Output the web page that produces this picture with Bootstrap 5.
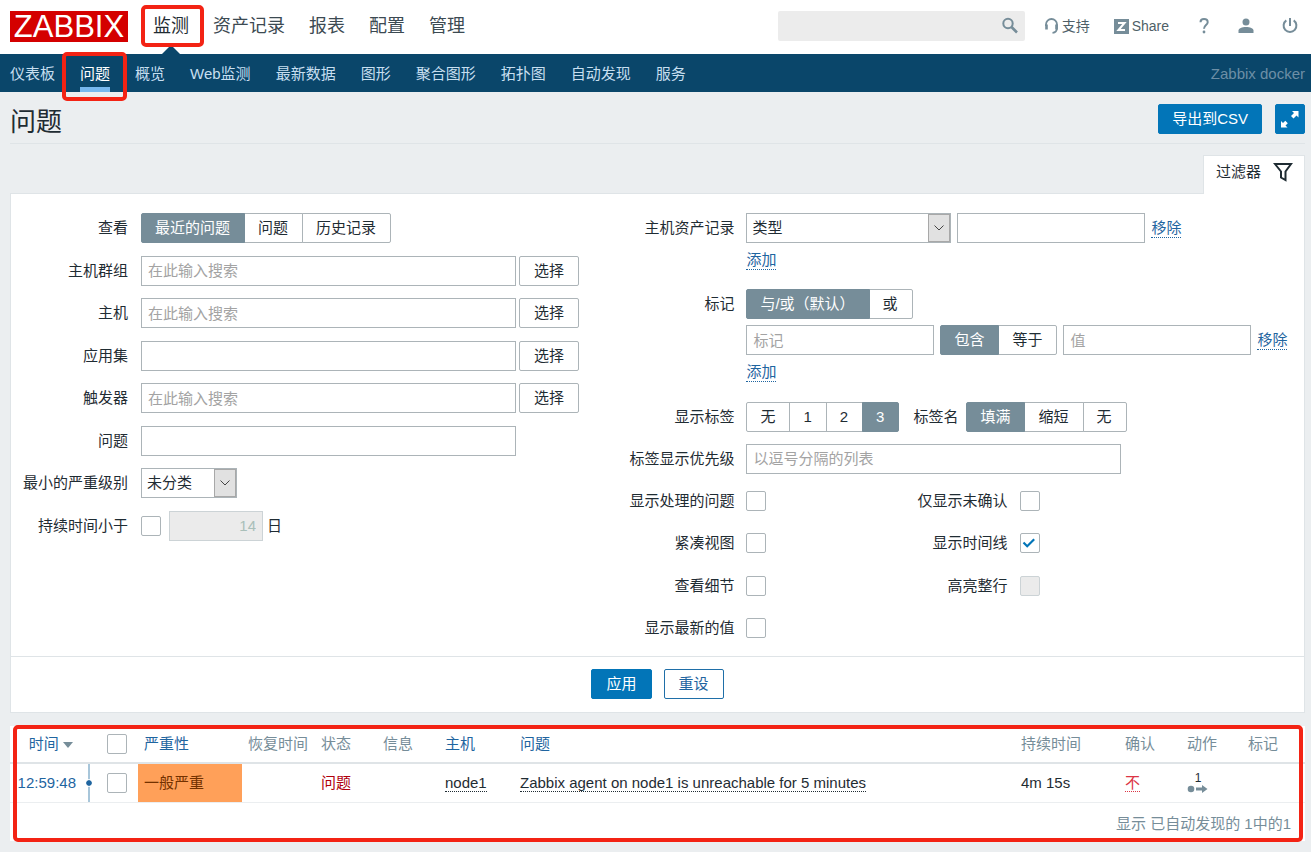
<!DOCTYPE html>
<html lang="zh-CN">
<head>
<meta charset="utf-8">
<meta name="viewport" content="width=device-width, initial-scale=1">
<title>Zabbix docker: 问题</title>
<link href="https://cdn.jsdelivr.net/npm/bootstrap@5.3.0/dist/css/bootstrap.min.css" rel="stylesheet">
<style>
  :root { --ink: #1f2c33; --line: #dfe4e7; --field: #acb4b8; --blue: #0275b8; --slate: #768d99; --frame: #f32314; }
  body { background: #ebeef0; color: var(--ink); font: 15px/20px "Liberation Sans", "Noto Sans CJK SC", sans-serif; }
  a { color: #1f65a0; text-decoration: none; }

  /* header */
  .top-bar { height: 54px; padding: 0 12px 2px 10px; }
  .brand { background: #d40000; color: #fff; font-size: 31px; line-height: 31px; width: 118px; height: 31px; text-align: center; margin-right: 13px; }
  .brand:hover { color: #fff; }
  .main-menu { align-self: flex-start; }
  .main-menu .nav-link { position: relative; display: flex; align-items: center; height: 54px; padding: 0 12px 3px; font-size: 18px; color: #3c4a52; }
  .main-menu .nav-link.active { color: var(--ink); }
  .main-menu .nav-link.active::after { content: ""; position: absolute; left: 50%; bottom: 0; margin-left: -9px; border: 9px solid transparent; border-top: 0; border-bottom-color: #0a466a; }
  .red-frame { position: absolute; border: 4px solid var(--frame); border-radius: 5px; pointer-events: none; z-index: 3; }
  .frame-main { inset: 5px -3px 7px 0; }
  .frame-sub { inset: -2px -5px -9px -6px; }
  .frame-table { inset: -1px 2px -1px 3px; }
  .search-box { width: 247px; position: relative; margin-right: 19px; }
  .search-box input { height: 30px; border: 0; border-radius: 2px; background: #ececec; padding: 0 34px 0 6px; font-size: 15px; }
  .search-box button { position: absolute; right: 6px; top: 6px; padding: 0; border: 0; background: none; display: flex; }
  .tools { gap: 24px; }
  .icon-tools { gap: 27px; margin-left: 4px; }
  .tool { color: #4f5f68; font-size: 14px; display: flex; align-items: center; gap: 3px; }
  .tool svg, .search-box svg { color: var(--slate); }

  /* sub navigation */
  .sub-bar { background: #0a466a; height: 38px; padding: 0 6px 0 0; }
  .sub-bar .nav-link { position: relative; height: 38px; padding: 10px 12px 8px; margin-right: 1px; color: #c7dff0; }
  .sub-bar .nav-item:first-child .nav-link { padding-left: 10px; }
  .sub-bar .nav-link.active { color: #fff; }
  .sub-bar .nav-link.active::after { content: ""; position: absolute; left: 12px; right: 12px; bottom: 0; height: 5px; background: #77b8ee; }
  .server-name { color: #6d8fa6; padding-top: 2px; }

  /* page body */
  .page-body { padding: 0 6px 11px 10px; }
  .title-row { height: 52px; border-bottom: 1px solid var(--line); }
  .title-row h1 { font-size: 26px; line-height: 36px; font-weight: 400; margin: 8px 0 0; }
  .title-buttons { gap: 13px; padding-top: 3px; }
  .btn { --bs-btn-border-radius: 2px; --bs-btn-font-size: 15px; --bs-btn-line-height: 20px; --bs-btn-padding-y: 4px; --bs-btn-padding-x: 14px; }
  .btn-blue { --bs-btn-bg: var(--blue); --bs-btn-color: #fff; --bs-btn-border-color: var(--blue); --bs-btn-hover-bg: #02659f; --bs-btn-hover-color: #fff; }
  .btn-line { --bs-btn-color: #1f65a0; --bs-btn-bg: #fff; --bs-btn-border-color: #1f6fa8; --bs-btn-hover-color: #1f65a0; }
  .btn-csv { --bs-btn-padding-x: 13px; }
  .btn-full { width: 30px; height: 30px; padding: 0; }
  .btn-pick { margin-left: 3px; }
  .btn-pick, .seg .btn { --bs-btn-bg: #fff; --bs-btn-color: var(--ink); --bs-btn-border-color: var(--field); --bs-btn-active-bg: var(--slate); --bs-btn-active-color: #fff; --bs-btn-active-border-color: var(--slate); }
  .seg .btn { padding-left: 13px; }
  .filter-tab { background: #fff; border: 1px solid var(--line); border-bottom: 0; height: 39px; padding: 0 11px 7px 12px; gap: 12px; margin: 11px 0 -1px; position: relative; color: var(--ink); }
  .panel-box { background: #fff; border: 1px solid var(--line); }

  /* filter form */
  .filter-grid { display: grid; grid-template-columns: 469fr 531fr; padding: 19px 0 13px; }
  .filter-left { min-height: 328px; }
  .filter-right { min-height: 430px; }
  .f-row { display: flex; align-items: center; min-height: 30px; }
  .f-row > .f-label { width: 117px; margin-right: 13px; text-align: right; flex: none; }
  .filter-right .f-row > .f-label { margin-right: 12px; }
  .f-stack { align-items: flex-start; }
  .f-stack > .f-label { padding-top: 5px; }
  .f-line { display: flex; align-items: center; gap: 6px; }
  .tag-line { margin-top: 6px; }
  .f-add { height: 34px; display: flex; align-items: center; }
  .f-second { width: 241px; text-align: right; margin-right: 13px; }
  .name-label { margin: 0 8px 0 14px; }
  .form-control, .form-select { height: 30px; border: 1px solid var(--field); border-radius: 0; font-size: 15px; line-height: 20px; padding: 4px 6px; color: var(--ink); }
  .form-control::placeholder { color: #a3a3a3; }
  .form-control:disabled { background: #ebebeb; color: #a9bfb9; border-color: #ccd3d6; text-align: right; }
  .form-select { padding: 4px 24px 4px 5px; background: #fff url("data:image/svg+xml,%3Csvg xmlns='http://www.w3.org/2000/svg' width='22' height='28'%3E%3Crect x='.5' y='.5' width='21' height='27' fill='%23e1e1e1' stroke='%23a8a8a8'/%3E%3Cpath d='M6.500 11.500l4.500 4.500 4.500-4.500' fill='none' stroke='%23444'/%3E%3C/svg%3E") no-repeat right center; background-size: 22px 28px; }
  .w-long { width: 375px; }
  .w-mid { width: 188px; }
  .w-inventory { width: 205px; }
  .w-severity { width: 96px; }
  .w-days { width: 94px; }
  .dotted { border-bottom: 1px dotted currentColor; line-height: 18px; }
  .form-check-input[type=checkbox] { width: 20px; height: 20px; margin: 0; border: 1px solid var(--field); border-radius: 2px; flex: none; display: block; }
  .form-check-input:checked { background-color: #fff; border-color: var(--field); }
  .form-check-input:checked[type=checkbox] { background-size: 20px; background-image: url("data:image/svg+xml,%3Csvg xmlns='http://www.w3.org/2000/svg' viewBox='0 0 20 20'%3E%3Cpath d='M3.500 9.500l3.700 3.700 7-7' fill='none' stroke='%230275b8' stroke-width='2.200'/%3E%3C/svg%3E"); }
  .form-check-input[type=checkbox]:disabled { background-color: #ebebeb; border-color: #ccd3d6; opacity: 1; }
  .filter-foot { border-top: 1px solid var(--line); padding: 12px 0 13px; gap: 12px; }

  /* problem list */
  .list-box { position: relative; background: #fff; margin-top: 13px; }
  .problem-table { table-layout: fixed; width: 100%; min-width: 1080px; }
  .problem-table th { font-weight: 400; color: var(--slate); height: 37px; padding: 0 6px; border-bottom: 2px solid var(--line); white-space: nowrap; }
  .problem-table td { height: 39px; padding: 0 6px; border-bottom: 1px solid #ebeef0; white-space: nowrap; }
  .problem-table .t-check { padding-left: 18px; }
  .problem-table .t-time { position: relative; text-align: right; padding-right: 16px; }
  .problem-table td.t-time { padding: 0 13px 0 0; }
  .t-time .rail { position: absolute; right: -1px; top: 0; bottom: 0; width: 2px; background: #a8c6da; }
  .t-time .rail::after { content: ""; position: absolute; left: -2px; top: 16px; width: 6px; height: 6px; border-radius: 50%; background: #1f65a0; outline: 1px solid #fff; }
  .problem-table td.sev { background: #ffa059; color: #733100; }
  .bad { color: #b0000c; }
  .dotted-ink { color: var(--ink); border-bottom: 1px dotted var(--ink); }
  .act-count { font-size: 12px; line-height: 12px; width: 22px; text-align: center; }
  .list-foot { color: var(--slate); text-align: right; padding: 11px 14px 7px; }
</style>
</head>
<body>
<header class="bg-white">
  <div class="top-bar d-flex align-items-center">
    <a class="brand" href="#">ZABBIX</a>
    <ul class="nav main-menu flex-nowrap">
      <li class="nav-item"><a class="nav-link active" href="#">监测<span class="red-frame frame-main"></span></a></li>
      <li class="nav-item"><a class="nav-link" href="#">资产记录</a></li>
      <li class="nav-item"><a class="nav-link" href="#">报表</a></li>
      <li class="nav-item"><a class="nav-link" href="#">配置</a></li>
      <li class="nav-item"><a class="nav-link" href="#">管理</a></li>
    </ul>
    <form class="search-box ms-auto">
      <input class="form-control" type="text" aria-label="搜索">
      <button type="button" aria-label="搜索"><svg width="18" height="18" viewBox="0 0 18 18" fill="none" stroke="currentColor"><circle cx="7" cy="6.500" r="4.700" stroke-width="2"/><path d="M10.500 10l5.500 5.500" stroke-width="2.600"/></svg></button>
    </form>
    <div class="tools d-flex align-items-center">
      <a class="tool" href="#"><svg width="15" height="17" viewBox="0 0 15 17" fill="none" stroke="currentColor"><path d="M2 8V6.500a5.500 5.500 0 0 1 11 0V10c0 3-1.500 4.500-4.500 4.800" stroke-width="1.800"/><path d="M2.500 6.500v5M12.500 6.500v5" stroke-width="2.600"/></svg>支持</a>
      <a class="tool" href="#"><svg width="15" height="15" viewBox="0 0 15 15"><path fill="currentColor" d="M0 0h15v15H0z"/><path d="M4 4h6.500L4.500 11H11" fill="none" stroke="#fff" stroke-width="2"/></svg>Share</a>
      <div class="icon-tools d-flex align-items-center">
        <a class="tool" href="#" aria-label="帮助"><svg width="14" height="18" viewBox="0 0 14 18"><path d="M3.500 5.200C3.500 3 5 2 7 2s3.700 1.100 3.700 3.200C10.700 8 7 8.300 7 11.800" fill="none" stroke="currentColor" stroke-width="2"/><circle cx="7" cy="15" r="1.400" fill="currentColor"/></svg></a>
        <a class="tool" href="#" aria-label="用户"><svg width="16" height="18" viewBox="0 0 16 18" fill="currentColor"><circle cx="8" cy="5" r="3.500"/><path d="M.5 16v-2.500C.5 11.500 4 10 8 10s7.500 1.500 7.500 3.500V16z"/></svg></a>
        <a class="tool" href="#" aria-label="退出"><svg width="18" height="18" viewBox="0 0 18 18" fill="none" stroke="currentColor" stroke-width="2"><path d="M9 1v8M5.300 3.400a6.400 6.400 0 1 0 7.400 0"/></svg></a>
      </div>
    </div>
  </div>
  <nav class="sub-bar d-flex align-items-center justify-content-between">
    <ul class="nav flex-nowrap">
      <li class="nav-item"><a class="nav-link" href="#">仪表板</a></li>
      <li class="nav-item"><a class="nav-link active" href="#">问题<span class="red-frame frame-sub"></span></a></li>
      <li class="nav-item"><a class="nav-link" href="#">概览</a></li>
      <li class="nav-item"><a class="nav-link" href="#">Web监测</a></li>
      <li class="nav-item"><a class="nav-link" href="#">最新数据</a></li>
      <li class="nav-item"><a class="nav-link" href="#">图形</a></li>
      <li class="nav-item"><a class="nav-link" href="#">聚合图形</a></li>
      <li class="nav-item"><a class="nav-link" href="#">拓扑图</a></li>
      <li class="nav-item"><a class="nav-link" href="#">自动发现</a></li>
      <li class="nav-item"><a class="nav-link" href="#">服务</a></li>
    </ul>
    <span class="server-name">Zabbix docker</span>
  </nav>
</header>

<main class="page-body">
  <div class="title-row d-flex align-items-center justify-content-between">
    <h1>问题</h1>
    <div class="title-buttons d-flex">
      <button class="btn btn-blue btn-csv" type="button">导出到CSV</button>
      <button class="btn btn-blue btn-full d-flex align-items-center justify-content-center" type="button" aria-label="全屏"><svg width="20" height="20" viewBox="0 0 20 20" fill="#fff"><path d="M12 2h6.500v6.500l-2-2-3 3-2.500-2.500 3-3zM7.500 18.500H1V12l2 2 2.300-2.300 2.500 2.500-2.300 2.300z"/></svg></button>
    </div>
  </div>
  <div class="d-flex justify-content-end">
    <a class="filter-tab d-flex align-items-center" href="#">过滤器<svg width="20" height="20" viewBox="0 0 20 20" fill="none" stroke="currentColor" stroke-width="2"><path d="M2 2h16l-5.500 7.500V18L8 15.500v-6z"/></svg></a>
  </div>

  <form class="panel-box">
    <div class="filter-grid">
      <div class="filter-left d-flex flex-column justify-content-between align-self-start">
        <div class="f-row"><span class="f-label">查看</span>
          <div class="btn-group seg" role="group" aria-label="查看">
            <input class="btn-check" type="radio" name="show" id="show1" checked><label class="btn" for="show1">最近的问题</label>
            <input class="btn-check" type="radio" name="show" id="show2"><label class="btn" for="show2">问题</label>
            <input class="btn-check" type="radio" name="show" id="show3"><label class="btn" for="show3">历史记录</label>
          </div>
        </div>
        <div class="f-row"><label class="f-label" for="groups">主机群组</label><input class="form-control w-long" id="groups" type="text" placeholder="在此输入搜索"><button class="btn btn-pick" type="button">选择</button></div>
        <div class="f-row"><label class="f-label" for="hosts">主机</label><input class="form-control w-long" id="hosts" type="text" placeholder="在此输入搜索"><button class="btn btn-pick" type="button">选择</button></div>
        <div class="f-row"><label class="f-label" for="apps">应用集</label><input class="form-control w-long" id="apps" type="text"><button class="btn btn-pick" type="button">选择</button></div>
        <div class="f-row"><label class="f-label" for="triggers">触发器</label><input class="form-control w-long" id="triggers" type="text" placeholder="在此输入搜索"><button class="btn btn-pick" type="button">选择</button></div>
        <div class="f-row"><label class="f-label" for="name">问题</label><input class="form-control w-long" id="name" type="text"></div>
        <div class="f-row"><label class="f-label" for="severity">最小的严重级别</label><select class="form-select w-severity" id="severity"><option>未分类</option></select></div>
        <div class="f-row"><label class="f-label" for="age">持续时间小于</label><input class="form-check-input" id="age" type="checkbox"><input class="form-control w-days ms-2 me-1" type="text" value="14" aria-label="天数" disabled><span>日</span></div>
      </div>

      <div class="filter-right d-flex flex-column justify-content-between">
        <div class="f-row f-stack"><label class="f-label" for="inv">主机资产记录</label>
          <div>
            <div class="f-line"><select class="form-select w-inventory" id="inv"><option>类型</option></select><input class="form-control w-mid" type="text" aria-label="资产记录值"><a class="dotted" href="#">移除</a></div>
            <div class="f-add"><a class="dotted" href="#">添加</a></div>
          </div>
        </div>
        <div class="f-row f-stack"><span class="f-label">标记</span>
          <div>
            <div class="btn-group seg d-flex" role="group" aria-label="标记">
              <input class="btn-check" type="radio" name="evaltype" id="ev1" checked><label class="btn flex-grow-0" for="ev1">与/或（默认）</label>
              <input class="btn-check" type="radio" name="evaltype" id="ev2"><label class="btn flex-grow-0" for="ev2">或</label>
            </div>
            <div class="f-line tag-line">
              <input class="form-control w-mid" type="text" placeholder="标记" aria-label="标记">
              <div class="btn-group seg" role="group" aria-label="运算符">
                <input class="btn-check" type="radio" name="op" id="op1" checked><label class="btn" for="op1">包含</label>
                <input class="btn-check" type="radio" name="op" id="op2"><label class="btn" for="op2">等于</label>
              </div>
              <input class="form-control w-mid" type="text" placeholder="值" aria-label="值">
              <a class="dotted" href="#">移除</a>
            </div>
            <div class="f-add"><a class="dotted" href="#">添加</a></div>
          </div>
        </div>
        <div class="f-row"><span class="f-label">显示标签</span>
          <div class="btn-group seg" role="group" aria-label="显示标签">
            <input class="btn-check" type="radio" name="tags" id="tg0"><label class="btn" for="tg0">无</label>
            <input class="btn-check" type="radio" name="tags" id="tg1"><label class="btn" for="tg1">1</label>
            <input class="btn-check" type="radio" name="tags" id="tg2"><label class="btn" for="tg2">2</label>
            <input class="btn-check" type="radio" name="tags" id="tg3" checked><label class="btn" for="tg3">3</label>
          </div>
          <span class="name-label">标签名</span>
          <div class="btn-group seg" role="group" aria-label="标签名">
            <input class="btn-check" type="radio" name="tname" id="tn1" checked><label class="btn" for="tn1">填满</label>
            <input class="btn-check" type="radio" name="tname" id="tn2"><label class="btn" for="tn2">缩短</label>
            <input class="btn-check" type="radio" name="tname" id="tn3"><label class="btn" for="tn3">无</label>
          </div>
        </div>
        <div class="f-row"><label class="f-label" for="prio">标签显示优先级</label><input class="form-control w-long" id="prio" type="text" placeholder="以逗号分隔的列表"></div>
        <div class="f-row"><label class="f-label" for="c1">显示处理的问题</label><input class="form-check-input" id="c1" type="checkbox"><label class="f-second" for="c2">仅显示未确认</label><input class="form-check-input" id="c2" type="checkbox"></div>
        <div class="f-row"><label class="f-label" for="c3">紧凑视图</label><input class="form-check-input" id="c3" type="checkbox"><label class="f-second" for="c4">显示时间线</label><input class="form-check-input" id="c4" type="checkbox" checked></div>
        <div class="f-row"><label class="f-label" for="c5">查看细节</label><input class="form-check-input" id="c5" type="checkbox"><label class="f-second" for="c6">高亮整行</label><input class="form-check-input" id="c6" type="checkbox" disabled></div>
        <div class="f-row"><label class="f-label" for="c7">显示最新的值</label><input class="form-check-input" id="c7" type="checkbox"></div>
      </div>
    </div>
    <div class="filter-foot d-flex justify-content-center">
      <button class="btn btn-blue" type="button">应用</button>
      <button class="btn btn-line" type="button">重设</button>
    </div>
  </form>

  <section class="list-box">
    <table class="problem-table">
      <colgroup><col style="width:79px"><col style="width:49px"><col style="width:104px"><col style="width:73px"><col style="width:62px"><col style="width:62px"><col style="width:75px"><col><col style="width:104px"><col style="width:62px"><col style="width:61px"><col style="width:63px"></colgroup>
      <thead>
        <tr>
          <th class="t-time"><a href="#">时间 <svg width="10" height="6" viewBox="0 0 10 6"><path fill="#768d99" d="M0 0h10L5 6z"/></svg></a></th>
          <th class="t-check"><input class="form-check-input" type="checkbox" aria-label="全选"></th>
          <th><a href="#">严重性</a></th><th>恢复时间</th><th>状态</th><th>信息</th>
          <th><a href="#">主机</a></th><th><a href="#">问题</a></th>
          <th>持续时间</th><th>确认</th><th>动作</th><th>标记</th>
        </tr>
      </thead>
      <tbody>
        <tr>
          <td class="t-time"><a href="#">12:59:48</a><span class="rail"></span></td>
          <td class="t-check"><input class="form-check-input" type="checkbox" aria-label="选择问题"></td>
          <td class="sev">一般严重</td><td></td><td class="bad">问题</td><td></td>
          <td><a class="dotted-ink" href="#">node1</a></td>
          <td><a class="dotted-ink" href="#">Zabbix agent on node1 is unreachable for 5 minutes</a></td>
          <td>4m 15s</td>
          <td><a class="dotted text-danger" href="#">不</a></td>
          <td><div class="act-count">1</div><svg class="d-block" width="22" height="10" viewBox="0 0 22 10" fill="#768d99"><circle cx="4" cy="5" r="3.300"/><path d="M9 3.500h6V1l5.500 4L15 9V6.500H9z"/></svg></td>
          <td></td>
        </tr>
      </tbody>
    </table>
    <div class="list-foot">显示 已自动发现的 1中的1</div>
    <div class="red-frame frame-table"></div>
  </section>
</main>
<script src="https://cdn.jsdelivr.net/npm/bootstrap@5.3.0/dist/js/bootstrap.bundle.min.js"></script>
</body>
</html>
